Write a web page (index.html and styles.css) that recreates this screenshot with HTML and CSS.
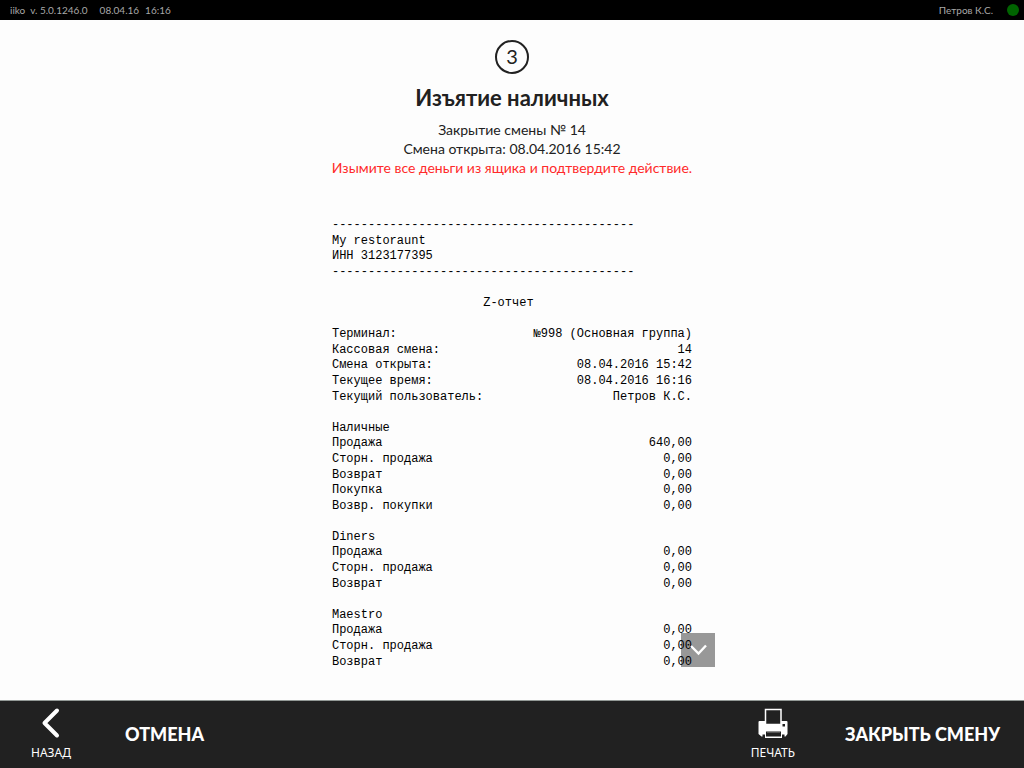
FILE: index.html
```html
<!DOCTYPE html>
<html lang="ru">
<head>
<meta charset="utf-8">
<meta name="viewport" content="width=device-width, initial-scale=1">
<title>Изъятие наличных</title>
<link rel="stylesheet" href="styles.css">
</head>
<body>
<header class="topbar">
  <span class="version">iiko&nbsp; v. 5.0.1246.0</span>
  <span class="date">08.04.16</span>
  <span class="time">16:16</span>
  <span class="user">Петров К.С.</span>
  <span class="status"></span>
</header>
<main class="content">
  <div class="step">3</div>
  <h1 class="title">Изъятие наличных</h1>
  <p class="line">Закрытие смены № 14</p>
  <p class="line">Смена открыта: 08.04.2016 15:42</p>
  <p class="line warning">Изымите все деньги из ящика и подтвердите действие.</p>
  <section class="report">
    <div class="receipt">
      <p>------------------------------------------</p>
      <p>My restoraunt</p>
      <p>ИНН 3123177395</p>
      <p>------------------------------------------</p>
      <h2 class="receipt-title">Z-отчет</h2>
      <table class="rows">
        <tbody>
          <tr><th>Терминал:</th><td>№998 (Основная группа)</td></tr>
          <tr><th>Кассовая смена:</th><td>14</td></tr>
          <tr><th>Смена открыта:</th><td>08.04.2016 15:42</td></tr>
          <tr><th>Текущее время:</th><td>08.04.2016 16:16</td></tr>
          <tr><th>Текущий пользователь:</th><td>Петров К.С.</td></tr>
        </tbody>
        <tbody>
          <tr><th>Наличные</th></tr>
          <tr><th>Продажа</th><td>640,00</td></tr>
          <tr><th>Сторн. продажа</th><td>0,00</td></tr>
          <tr><th>Возврат</th><td>0,00</td></tr>
          <tr><th>Покупка</th><td>0,00</td></tr>
          <tr><th>Возвр. покупки</th><td>0,00</td></tr>
        </tbody>
        <tbody>
          <tr><th>Diners</th></tr>
          <tr><th>Продажа</th><td>0,00</td></tr>
          <tr><th>Сторн. продажа</th><td>0,00</td></tr>
          <tr><th>Возврат</th><td>0,00</td></tr>
        </tbody>
        <tbody>
          <tr><th>Maestro</th></tr>
          <tr><th>Продажа</th><td>0,00</td></tr>
          <tr><th>Сторн. продажа</th><td>0,00</td></tr>
          <tr><th>Возврат</th><td>0,00</td></tr>
        </tbody>
      </table>
    </div>
    <button class="scroll-down" type="button" aria-label="Прокрутить вниз">
      <svg width="34" height="34" viewBox="0 0 34 34" fill="none" stroke="#fff" stroke-width="2.400"><path d="M10 13 L17.500 20.500 L25 12.500"/></svg>
    </button>
  </section>
</main>
<footer class="actions">
  <button class="icon-action back" type="button">
    <svg width="32" height="32" viewBox="0 0 32 32" fill="none" stroke="#fff" stroke-width="4" stroke-linecap="round" stroke-linejoin="round"><path d="M22 3.500 L9.500 16 L22 28.500"/></svg>
    <span>НАЗАД</span>
  </button>
  <button class="text-action" type="button">ОТМЕНА</button>
  <button class="icon-action print" type="button">
    <svg width="32" height="32" viewBox="0 0 32 32"><path fill="#fff" d="M2.500 14H29.500Q30.500 14 30.500 15V27L28.500 29.500H26V31H7V29.500H4.500L1.500 27V15Q1.500 14 2.500 14Z"/><path d="M8.500 2.500H24V17.500H8.500Z" fill="#212121" stroke="#fff" stroke-width="1.500"/><path fill="#212121" d="M9 24.500H24V29.500H9ZM25.500 17H28V19.500H25.500ZM5.500 27.500H8V31H5.500ZM25 27.500H27.500V31H25Z"/><path d="M10 25.500H23" stroke="#555"/></svg>
    <span>ПЕЧАТЬ</span>
  </button>
  <button class="text-action" type="button">ЗАКРЫТЬ СМЕНУ</button>
</footer>
</body>
</html>
```
FILE: styles.css
```css
* { box-sizing: border-box; }
body {
  margin: 0;
  min-height: 100vh;
  display: flex;
  flex-direction: column;
  background: #fdfdfd;
  color: #212121;
  font-family: Lato, "Noto Sans", sans-serif;
}
h1, h2, p { margin: 0; }
button {
  border: 0;
  padding: 0;
  background: none;
  color: #fff;
  font-family: inherit;
  cursor: pointer;
}
svg { display: block; }

.topbar {
  display: flex;
  align-items: center;
  height: 20px;
  padding: 0 5px 1px 10px;
  background: #000;
  color: #a8a8a8;
  font-size: 10px;
}
.date { margin-left: 12px; }
.time { margin-left: 6px; }
.user { margin-left: auto; }
.status {
  width: 12px;
  height: 12px;
  margin-left: 14px;
  border-radius: 50%;
  background: #006400;
}

.content {
  flex: 1;
  display: flex;
  flex-direction: column;
  align-items: center;
  padding: 20px 16px 28px;
}
.step {
  display: grid;
  place-items: center;
  width: 34px;
  height: 34px;
  padding-bottom: 2px;
  border: 2px solid #212121;
  border-radius: 50%;
  font-size: 20px;
}
.title {
  margin: 10px 0 8px;
  font-size: 22px;
  line-height: 28px;
  font-weight: 700;
}
.line {
  font-size: 14px;
  line-height: 19px;
}
.warning { color: #ff2a2a; }

.report {
  position: relative;
  margin-top: 41px;
  padding: 0 23px;
}
.receipt {
  width: 50ch;
  color: #000;
  font-family: "Liberation Mono", monospace;
  font-size: 12px;
  line-height: 1.3;
}
.receipt-title {
  margin: 1.3em 0;
  padding-left: 21ch;
  font-size: inherit;
  font-weight: 400;
}
.rows, .rows tbody { display: block; }
.rows tbody + tbody { margin-top: 1.3em; }
.rows tr { display: flex; justify-content: space-between; }
.rows th, .rows td { display: block; padding: 0; font-weight: 400; }
.scroll-down {
  position: absolute;
  right: 0;
  bottom: 3px;
  background: rgba(0, 0, 0, 0.4);
}

.actions {
  display: flex;
  align-items: center;
  height: 68px;
  padding: 0 24px 2px;
  border-top: 1px solid #939996;
  background: #212121;
}
.icon-action {
  display: flex;
  flex-direction: column;
  align-items: center;
  gap: 6px;
  width: 54px;
  font-family: "Noto Sans", sans-serif;
  font-size: 12px;
  line-height: 16px;
}
.back { margin-right: 47px; }
.print { margin: 0 45px 0 auto; }
.text-action {
  font-family: "Lato Black", Lato, sans-serif;
  font-size: 18px;
  font-weight: 900;
}
```
